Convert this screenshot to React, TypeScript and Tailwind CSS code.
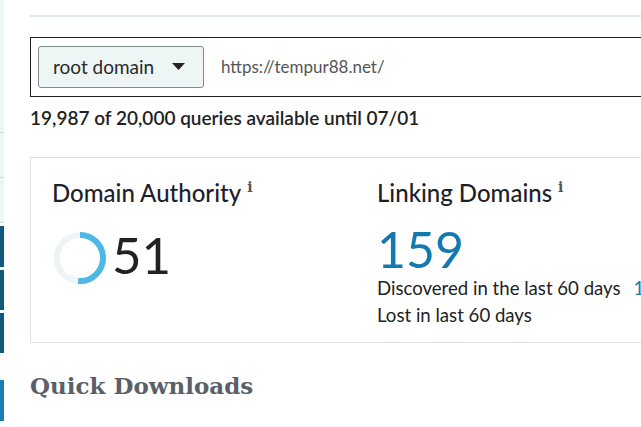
import React from "react";

function Donut() {
  const r = 23;
  const c = 2 * Math.PI * r;
  const pct = 0.51;
  return (
    <svg width="56" height="56" viewBox="0 0 56 56" className="shrink-0">
      <circle cx="28" cy="28" r={r} fill="none" stroke="#eef4f5" strokeWidth="6" />
      <circle
        cx="28"
        cy="28"
        r={r}
        fill="none"
        stroke="#4db8e6"
        strokeWidth="6"
        strokeDasharray={`${c * pct} ${c}`}
        transform="rotate(-90 28 28)"
      />
    </svg>
  );
}

function Info() {
  return (
    <span
      className="inline-block ml-[6px] text-[14px] font-bold text-[#555] -translate-y-[10px]"
      style={{ fontFamily: "'DejaVu Serif', serif" }}
    >
      i
    </span>
  );
}

export default function App() {
  return (
    <div className="w-[641px] h-[427px] overflow-hidden bg-white flex" style={{ fontFamily: "Lato, 'Noto Sans', sans-serif" }}>
      {/* sidebar sliver */}
      <div className="w-[4px] shrink-0 flex flex-col">
        <div className="h-[133px] bg-[#eef5f5] border-b border-[#d4dcdc]" />
        <div className="h-[45px] bg-[#eef5f5] border-b border-[#d4dcdc]" />
        <div className="h-[45px] bg-[#eef5f5] border-b border-[#d4dcdc]" />
        <div className="h-[3px]" />
        <div className="h-[41px] bg-[#0f5a7e]" />
        <div className="h-[3px]" />
        <div className="h-[40px] bg-[#0f5a7e]" />
        <div className="h-[3px]" />
        <div className="h-[40px] bg-[#0f5a7e]" />
        <div className="h-[27px]" />
        <div className="h-[41px] bg-[#1a7fb5]" />
      </div>

      <div className="flex-1 pl-[26px] min-w-[700px]">
        <div className="mt-[15px] h-[2px] bg-[#e0e8e6]" />

        <div className="mt-[20px] h-[60px] border border-[#222] flex items-center pl-[7px]">
          <div className="h-[42px] w-[166px] bg-[#eef5f5] border border-[#7d8c8c] rounded-[3px] flex items-center pl-[14px] text-[19px] text-[#2a2a2a]">
            <span>root domain</span>
            <svg width="13" height="8" viewBox="0 0 13 8" className="ml-[18px]">
              <path d="M0 0 L13 0 L6.5 7 Z" fill="#222" />
            </svg>
          </div>
          <span className="ml-[17px] text-[17px] text-[#555]">https://tempur88.net/</span>
        </div>

        <div className="mt-[11px] text-[19px] font-semibold text-[#222] leading-[20px]">
          19,987 of 20,000 queries available until 07/01
        </div>

        <div className="mt-[29px] h-[186px] border border-[#dde3e3] flex pt-[20px]">
          <div className="w-[346px] pl-[21px]">
            <div className="text-[24px] font-medium text-[#1f1f2a] leading-[30px] whitespace-nowrap">
              Domain Authority<Info />
            </div>
            <div className="mt-[18px] flex items-start">
              <Donut />
              <span className="ml-[4px] text-[51px] font-normal text-[#222] leading-[50px]">51</span>
            </div>
          </div>
          <div className="flex-1">
            <div className="text-[24px] font-medium text-[#1f1f2a] leading-[30px] whitespace-nowrap">
              Linking Domains<Info />
            </div>
            <div className="mt-[12px] text-[50px] font-normal text-[#1479ae] leading-[50px]">159</div>
            <div className="mt-[1px] flex text-[18.6px] text-[#222] leading-[27px] whitespace-nowrap">
              <span>Discovered in the last 60 days</span>
              <span className="ml-[13px] text-[#1479ae]">1</span>
            </div>
            <div className="text-[18.6px] text-[#222] leading-[27px]">Lost in last 60 days</div>
          </div>
        </div>

        <div
          className="mt-[26px] text-[23px] font-bold text-[#5a6068]"
          style={{ fontFamily: "'DejaVu Serif', serif" }}
        >
          Quick Downloads
        </div>
      </div>
    </div>
  );
}
